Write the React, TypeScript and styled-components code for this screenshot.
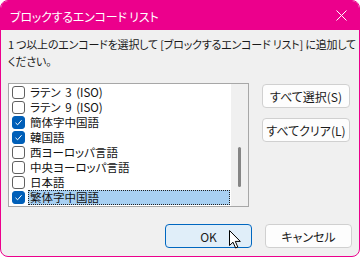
import * as React from 'react';
import styled, { createGlobalStyle } from 'styled-components';

const GlobalStyle = createGlobalStyle`
  html, body {
    margin: 0;
    padding: 0;
    background: #ffffff;
  }
  body {
    font-family: "Noto Sans CJK JP", "Noto Sans", sans-serif;
    font-feature-settings: "palt";
  }
`;

const Window = styled.div`
  position: relative;
  width: 360px;
  height: 257px;
  box-sizing: border-box;
  border: 1px solid #ec008c;
  border-radius: 8px;
  overflow: hidden;
  background: #f0f0f0;
  display: flex;
  flex-direction: column;
`;

const TitleBar = styled.div`
  height: 29px;
  background: #ec008c;
  display: flex;
  align-items: center;
  justify-content: space-between;
  padding: 0 9px 0 9px;
  flex-shrink: 0;
`;

const Title = styled.div`
  color: #ffffff;
  font-size: 12px;
  letter-spacing: -0.2px;
  padding-top: 1px;
`;

const Close = styled.svg`
  width: 11px;
  height: 11px;
  margin-right: 3px;
`;

const Body = styled.div`
  flex: 1;
  display: flex;
  flex-direction: column;
  padding: 6px 7px 8px 7px;
`;

const Message = styled.div`
  font-size: 11px;
  line-height: 17px;
  color: #1a1a1a;
  white-space: nowrap;
  letter-spacing: -0.2px;
`;

const Row = styled.div`
  display: flex;
  gap: 13px;
  margin-top: 13px;
`;

const ListBox = styled.div`
  width: 241px;
  height: 124px;
  box-sizing: border-box;
  border: 1px solid #a7a7a7;
  background: #ffffff;
  display: flex;
`;

const Items = styled.div`
  flex: 1;
  padding-top: 1px;
  display: flex;
  flex-direction: column;
`;

const Item = styled.div`
  height: 15px;
  display: flex;
  align-items: center;
  gap: 3px;
  padding-left: 3px;
`;

const Box = styled.div<{ checked: boolean }>`
  width: 13px;
  height: 13px;
  box-sizing: border-box;
  border-radius: 3px;
  border: 1px solid ${p => (p.checked ? '#005fb8' : '#606060')};
  background: ${p => (p.checked ? '#005fb8' : '#ffffff')};
  display: flex;
  align-items: center;
  justify-content: center;
  flex-shrink: 0;
`;

const Label = styled.div<{ selected?: boolean }>`
  flex: 1;
  height: 15px;
  box-sizing: border-box;
  font-size: 11.5px;
  line-height: 13px;
  color: #111111;
  padding-left: 1px;
  background: ${p => (p.selected ? '#a8d0f2' : 'transparent')};
  border: 1px ${p => (p.selected ? 'dotted #202020' : 'solid transparent')};
  margin-right: 1px;
  overflow: hidden;
  word-spacing: 2px;
`;

const ScrollTrack = styled.div`
  width: 17px;
  background: #f0f0f0;
  display: flex;
  justify-content: center;
  padding-top: 63px;
  box-sizing: border-box;
`;

const Thumb = styled.div`
  width: 3px;
  height: 40px;
  border-radius: 2px;
  background: #858585;
`;

const SideButtons = styled.div`
  display: flex;
  flex-direction: column;
  gap: 10px;
  padding-top: 1px;
`;

const Button = styled.button<{ primary?: boolean; w?: number }>`
  width: ${p => p.w || 88}px;
  height: 24px;
  box-sizing: border-box;
  border-radius: 4px;
  border: 1px solid ${p => (p.primary ? '#0067c0' : '#d0d0d0')};
  background: ${p => (p.primary ? '#e0eef9' : '#fdfdfd')};
  font-family: "Noto Sans CJK JP", "Noto Sans", sans-serif;
  font-feature-settings: "palt";
  font-size: 12px;
  color: #1a1a1a;
  padding: 0;
  display: flex;
  align-items: center;
  justify-content: center;
`;

const Footer = styled.div`
  margin-top: auto;
  display: flex;
  justify-content: flex-end;
  gap: 13px;
`;

const Cursor = styled.svg`
  position: absolute;
  left: 228px;
  top: 229px;
  width: 13px;
  height: 19px;
`;

const items = [
  { label: 'ラテン 3 (ISO)', checked: false },
  { label: 'ラテン 9 (ISO)', checked: false },
  { label: '簡体字中国語', checked: true },
  { label: '韓国語', checked: true },
  { label: '西ヨーロッパ言語', checked: false },
  { label: '中央ヨーロッパ言語', checked: false },
  { label: '日本語', checked: false },
  { label: '繁体字中国語', checked: true, selected: true }
];

const Check = () => (
  <svg width="9" height="9" viewBox="0 0 9 9">
    <path d="M1.5 4.8 L3.6 6.8 L7.6 2.2" fill="none" stroke="#ffffff" strokeWidth="1" />
  </svg>
);

export default function App() {
  return (
    <>
      <GlobalStyle />
      <Window>
        <TitleBar>
          <Title>ブロックするエンコード リスト</Title>
          <Close viewBox="0 0 11 11">
            <path d="M0.5 0.5 L10.5 10.5 M10.5 0.5 L0.5 10.5" stroke="#ffffff" strokeWidth="1" />
          </Close>
        </TitleBar>
        <Body>
          <Message>
            1 つ以上のエンコードを選択して [ブロックするエンコード リスト] に追加して
            <br />
            ください。
          </Message>
          <Row>
            <ListBox>
              <Items>
                {items.map((item, index) => (
                  <Item key={index}>
                    <Box checked={item.checked}>{item.checked && <Check />}</Box>
                    <Label selected={item.selected}>{item.label}</Label>
                  </Item>
                ))}
              </Items>
              <ScrollTrack>
                <Thumb />
              </ScrollTrack>
            </ListBox>
            <SideButtons>
              <Button>すべて選択(S)</Button>
              <Button>すべてクリア(L)</Button>
            </SideButtons>
          </Row>
          <Footer>
            <Button primary w={87}>OK</Button>
            <Button w={87}>キャンセル</Button>
          </Footer>
        </Body>
        <Cursor viewBox="0 0 13 19">
          <path
            d="M0.5 0.5 L0.5 15.5 L4 12.2 L6.6 18 L8.8 17 L6.3 11.4 L11.3 11.4 Z"
            fill="#ffffff"
            stroke="#000000"
            strokeWidth="1"
            strokeLinejoin="round"
          />
        </Cursor>
      </Window>
    </>
  );
}
